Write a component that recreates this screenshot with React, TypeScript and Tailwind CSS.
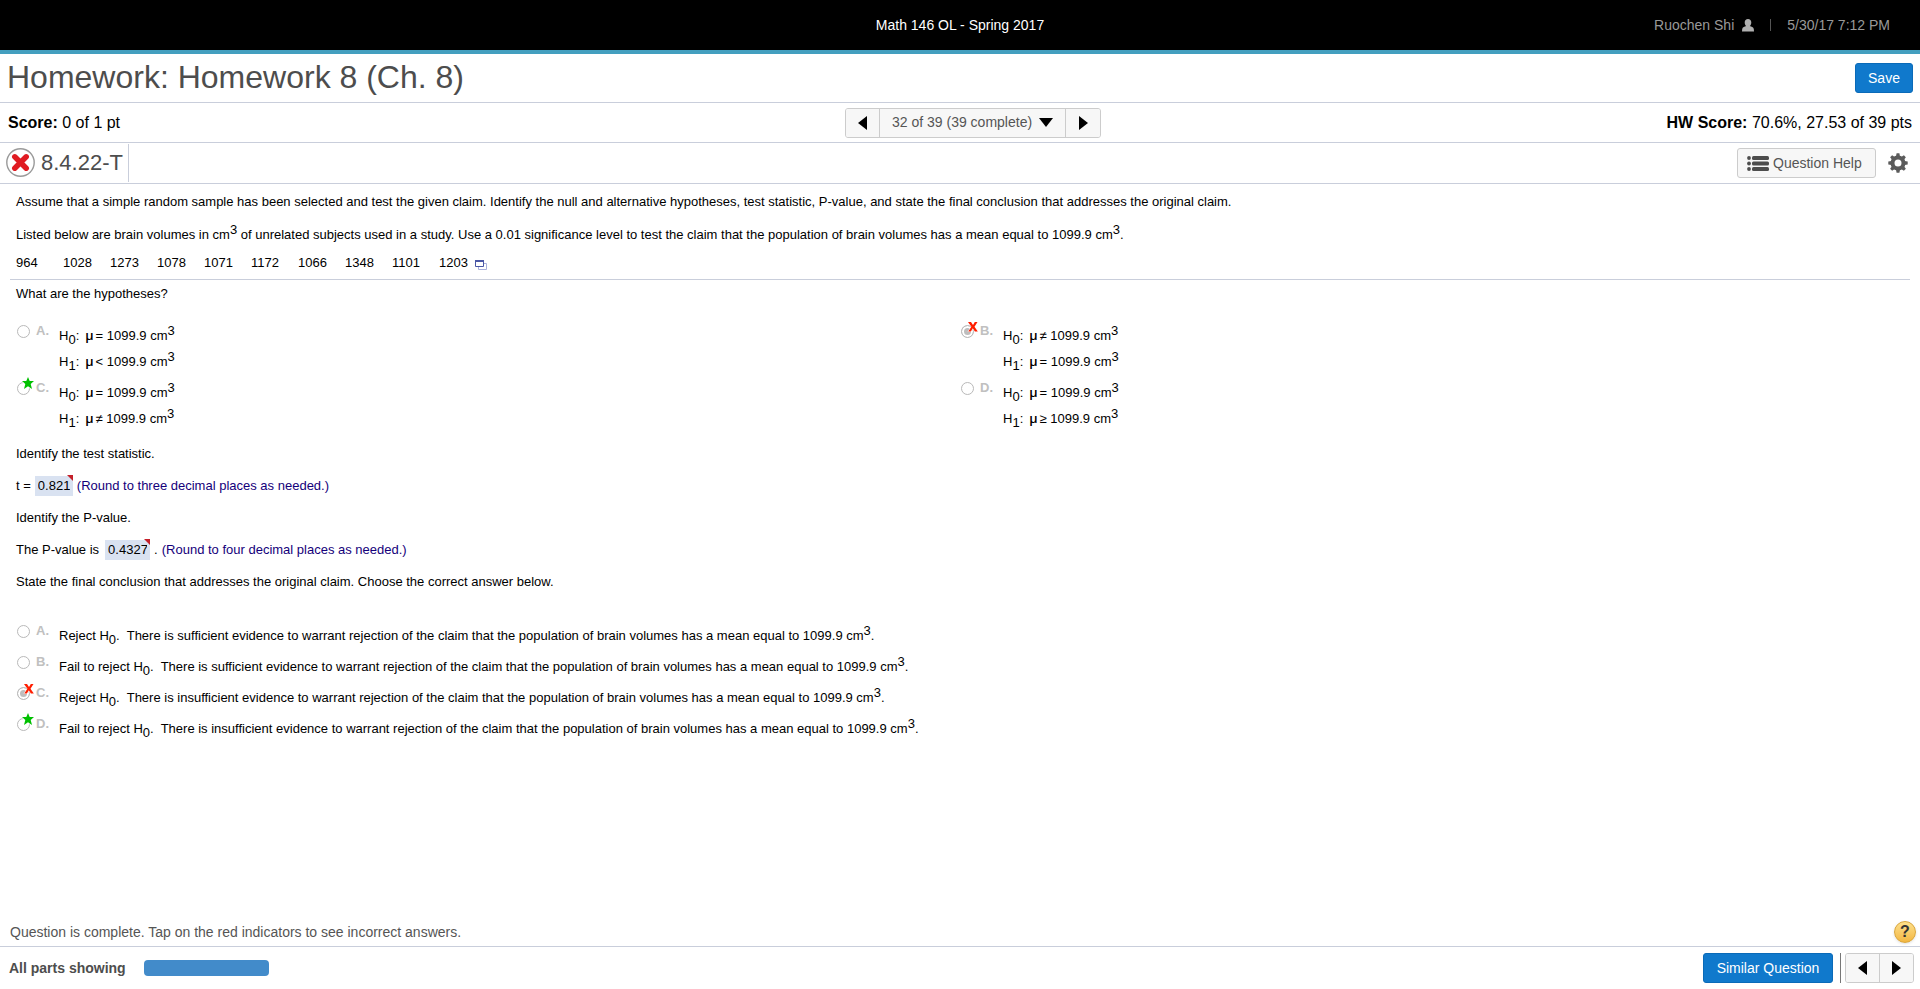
import type { ReactNode } from "react";

type Mark = "right" | "wrong";

interface Choice {
  letter: string;
  mark?: Mark;
  checked?: boolean;
  lines: ReactNode[];
}

const volumes = [964, 1028, 1273, 1078, 1071, 1172, 1066, 1348, 1101, 1203];

function Sup({ children }: { children: ReactNode }) {
  return <sup className="static align-[5px] text-[13px]">{children}</sup>;
}

function Sub({ children }: { children: ReactNode }) {
  return <sub className="static align-[-4px] text-[13px]">{children}</sub>;
}

function Hypothesis({ index, sign }: { index: number; sign: string }) {
  return (
    <>
      H<Sub>{index}</Sub>:
      <span className="mx-0.5 ml-1.5 font-['Open_Sans','Liberation_Sans',sans-serif] leading-none font-semibold">
        μ
      </span>
      {sign} 1099.9 cm<Sup>3</Sup>
    </>
  );
}

function Conclusion({ verb, amount }: { verb: string; amount: string }) {
  return (
    <>
      {verb} H<Sub>0</Sub>.&nbsp; There is {amount} evidence to warrant rejection of the claim that the population of
      brain volumes has a mean equal to 1099.9 cm<Sup>3</Sup>.
    </>
  );
}

const hypotheses: Choice[] = [
  { letter: "A", lines: [<Hypothesis index={0} sign="=" />, <Hypothesis index={1} sign="<" />] },
  {
    letter: "B",
    mark: "wrong",
    checked: true,
    lines: [<Hypothesis index={0} sign="≠" />, <Hypothesis index={1} sign="=" />],
  },
  { letter: "C", mark: "right", lines: [<Hypothesis index={0} sign="=" />, <Hypothesis index={1} sign="≠" />] },
  { letter: "D", lines: [<Hypothesis index={0} sign="=" />, <Hypothesis index={1} sign="≥" />] },
];

const conclusions: Choice[] = [
  { letter: "A", lines: [<Conclusion verb="Reject" amount="sufficient" />] },
  { letter: "B", lines: [<Conclusion verb="Fail to reject" amount="sufficient" />] },
  { letter: "C", mark: "wrong", checked: true, lines: [<Conclusion verb="Reject" amount="insufficient" />] },
  { letter: "D", mark: "right", lines: [<Conclusion verb="Fail to reject" amount="insufficient" />] },
];

function MarkIcon({ mark }: { mark: Mark }) {
  return mark === "right" ? (
    <svg viewBox="0 0 12 12" className="absolute -top-[5px] left-[5px] size-3 overflow-visible" aria-hidden="true">
      <path
        d="M6 0l1.700 4.100H12L8.700 7l1.300 5L6 9.200 2 12l1.300-5L0 4.100h4.300z"
        fill="#00c000"
        stroke="#ffffff"
        strokeWidth="1.500"
        paintOrder="stroke"
      />
    </svg>
  ) : (
    <svg viewBox="0 0 10 10" className="absolute -top-[3px] left-[7px] size-[10px] overflow-visible" aria-hidden="true">
      <path
        d="M0 0h3L5 3 6.800 0h2.700L6.500 4.700 9.800 9.500H6.900L4.800 6.300 2.900 9.500H.2L3.400 4.700z"
        fill="#ff1e00"
        stroke="#ffffff"
        paintOrder="stroke"
      />
    </svg>
  );
}

function ChoiceRow({ group, choice }: { group: string; choice: Choice }) {
  const id = `${group}-${choice.letter}`;
  return (
    <div className="flex items-start">
      <span className="relative mt-[3px] mr-1.5 ml-px flex">
        <input
          type="radio"
          id={id}
          name={group}
          disabled
          defaultChecked={choice.checked}
          className="size-[13px] appearance-none rounded-full border border-[#b9b9b9] bg-white checked:bg-[#bdbdbd] checked:shadow-[inset_0_0_0_2px_white]"
        />
        {choice.mark && <MarkIcon mark={choice.mark} />}
      </span>
      <label htmlFor={id} className="flex items-start">
        <span className="w-[23px] text-[13px] leading-[18px] font-bold text-[#c0c0c0]">{choice.letter}.</span>
        <span className="flex flex-col gap-1.5 pt-1 leading-5">
          {choice.lines.map((line, i) => (
            <span key={i}>{line}</span>
          ))}
        </span>
      </label>
    </div>
  );
}

function Answer({ id, value, label, wide }: { id: string; value: string; label: string; wide?: boolean }) {
  return (
    <span className={`relative inline-flex ${wide ? "mr-1 ml-1.5" : "mx-1"}`}>
      <input
        id={id}
        aria-label={label}
        readOnly
        value={value}
        className={`h-5 bg-[#d9e2f1] px-[3px] ${wide ? "w-[45px]" : "w-[38px]"}`}
      />
      <svg viewBox="0 0 6 6" className="absolute -top-px right-0 size-1.5" aria-hidden="true">
        <path d="M0 0h6v6z" fill="#c4202a" />
      </svg>
    </span>
  );
}

function Arrow({ left }: { left?: boolean }) {
  return (
    <svg viewBox="0 0 9 14" className="h-3.5 w-[9px]" aria-hidden="true">
      <path d={left ? "M9 0v14L0 7z" : "M0 0v14l9-7z"} fill="#000000" />
    </svg>
  );
}

const stepButton = "flex h-full w-[34px] items-center justify-center bg-[#f7f7f7]";
const blueButton = "h-[30px] rounded-[3px] border border-[#0a6ab8] bg-[#1079cc] text-white";

export default function App() {
  return (
    <div className="flex min-h-screen flex-col bg-white font-['Liberation_Sans',Arial,sans-serif] text-[13px] text-black">
      <header className="grid h-[54px] grid-cols-[1fr_auto_1fr] items-center border-b-4 border-[#439fbf] bg-black text-[14px]">
        <span />
        <span className="text-white">Math 146 OL - Spring 2017</span>
        <div className="flex items-center justify-end pr-[30px] text-[#999999]">
          <span>Ruochen Shi</span>
          <svg viewBox="0 0 12 13" className="mr-4 ml-2 h-[13px] w-3" fill="#b0b0b0" aria-hidden="true">
            <path d="M6 0c2 0 3.300 1.500 3.300 3.500 0 1.500-.6 2.900-1.500 3.600 1.600.6 3.700 1 4 3L12 12.500H0L.2 10.100c.3-2 2.400-2.400 4-3-.9-.7-1.500-2.100-1.500-3.600C2.700 1.500 4 0 6 0z" />
          </svg>
          <span className="mr-4 h-3 w-px bg-[#555555]" />
          <span>5/30/17 7:12 PM</span>
        </div>
      </header>

      <div className="flex h-[49px] items-center justify-between border-b border-[#c9cedb] pr-[7px] pl-[7px]">
        <h1 className="pb-0.5 text-[32px] leading-9 text-[#4d4d4d]">Homework: Homework 8 (Ch. 8)</h1>
        <button type="button" className={`${blueButton} w-[58px] text-[14px]`}>
          Save
        </button>
      </div>

      <div className="grid h-10 grid-cols-[1fr_auto_1fr] items-center border-b border-[#c9cedb] px-2 text-[16px]">
        <p>
          <b>Score:</b> 0 of 1 pt
        </p>
        <nav className="ml-[26px] flex h-[30px] divide-x divide-[#cccccc] overflow-hidden rounded-[3px] border border-[#cccccc] bg-[#f7f7f7] text-[14px] text-[#555555]">
          <button type="button" aria-label="Previous question" className={stepButton}>
            <Arrow left />
          </button>
          <span className="relative flex items-center">
            <select aria-label="Question" className="h-full w-[185px] appearance-none bg-transparent pl-3">
              <option>32 of 39 (39 complete)</option>
            </select>
            <svg viewBox="0 0 14 9" className="pointer-events-none absolute right-3 h-[9px] w-3.5" aria-hidden="true">
              <path d="M0 0h14L7 9z" fill="#000000" />
            </svg>
          </span>
          <button type="button" aria-label="Next question" className={stepButton}>
            <Arrow />
          </button>
        </nav>
        <p className="text-right">
          <b>HW Score:</b> 70.6%, 27.53 of 39 pts
        </p>
      </div>

      <div className="flex h-[41px] items-center justify-between border-b border-[#c9cedb] pr-3 pl-1.5">
        <div className="flex h-[38px] items-center gap-1.5 border-r border-[#c9cedb] pr-[5px] pb-0.5">
          <svg viewBox="0 0 29 29" className="size-[29px]" aria-hidden="true">
            <circle cx="14.500" cy="14.500" r="13.700" fill="#ffffff" stroke="#9a9a9a" strokeWidth="1.400" />
            <path d="M8.800 8.800l11.400 11.400M20.200 8.800L8.800 20.200" stroke="#e01b22" strokeWidth="5.500" strokeLinecap="round" />
          </svg>
          <h2 className="text-[22px] text-[#4d4d4d]">8.4.22-T</h2>
        </div>
        <div className="flex items-center gap-3">
          <button
            type="button"
            className="flex h-[30px] w-[139px] items-center gap-1 rounded-[3px] border border-[#cccccc] bg-[#f7f7f7] pl-[9px] text-[14px] text-[#555555]"
          >
            <svg viewBox="0 0 22 15" className="h-[15px] w-[22px]" fill="#4d4d4d" aria-hidden="true">
              {[2, 7.5, 13].map((y) => (
                <g key={y}>
                  <circle cx="2" cy={y} r="1.900" />
                  <rect x="5" y={y - 2} width="17" height="4" rx="1.500" />
                </g>
              ))}
            </svg>
            Question Help
          </button>
          <button type="button" aria-label="Settings">
            <svg viewBox="0 0 20 20" className="size-5" aria-hidden="true">
              <circle cx="10" cy="10" r="5.500" fill="none" stroke="#5b5b5b" strokeWidth="4" />
              {[0, 45, 90, 135, 180, 225, 270, 315].map((a) => (
                <path key={a} d="M8 3.500L8.600.3h2.800l.6 3.200z" fill="#5b5b5b" transform={`rotate(${a} 10 10)`} />
              ))}
            </svg>
          </button>
        </div>
      </div>

      <main className="flex grow flex-col">
        <section className="mx-[10px] border-b border-[#c9cedb] px-1.5 pt-2 pb-1.5 leading-5">
          <p>
            Assume that a simple random sample has been selected and test the given claim. Identify the null and
            alternative hypotheses, test statistic, P-value, and state the final conclusion that addresses the original
            claim.
          </p>
          <p className="mt-[13px]">
            Listed below are brain volumes in cm<Sup>3</Sup> of unrelated subjects used in a study. Use a 0.01
            significance level to test the claim that the population of brain volumes has a mean equal to 1099.9 cm
            <Sup>3</Sup>.
          </p>
          <div className="mt-2 flex items-center">
            <table>
              <tbody>
                <tr>
                  {volumes.map((v) => (
                    <td key={v} className="w-[47px] min-w-[47px] p-0 last:w-9 last:min-w-9">
                      {v}
                    </td>
                  ))}
                </tr>
              </tbody>
            </table>
            <button type="button" aria-label="Open data table">
              <svg viewBox="0 0 12 10" className="mt-1 h-[10px] w-3" aria-hidden="true">
                <path d="M3.500 3.500h8v6h-8z" fill="#ffffff" stroke="#a9b0dc" />
                <path d="M.5.5h8v6h-8z" fill="#ffffff" stroke="#4a57a6" />
                <path d="M0 0h9v2H0z" fill="#4a57a6" />
              </svg>
            </button>
          </div>
        </section>

        <section className="px-4 pt-1 leading-5">
          <p>What are the hypotheses?</p>
          <div className="mt-[18px] grid grid-cols-2 gap-y-[7px]">
            {hypotheses.map((c) => (
              <ChoiceRow key={c.letter} group="hypotheses" choice={c} />
            ))}
          </div>
          <div className="mt-[15px] flex flex-col gap-3">
            <p>Identify the test statistic.</p>
            <p className="flex items-center">
              t =<Answer id="statistic" value="0.821" label="Test statistic" />
              <span className="text-[#14007a]">(Round to three decimal places as needed.)</span>
            </p>
            <p>Identify the P-value.</p>
            <p className="flex items-center">
              The P-value is
              <Answer id="p-value" value="0.4327" label="P-value" wide />
              <span className="mr-1">.</span>
              <span className="text-[#14007a]">(Round to four decimal places as needed.)</span>
            </p>
            <p>State the final conclusion that addresses the original claim. Choose the correct answer below.</p>
          </div>
          <div className="mt-[30px] flex flex-col gap-[7px]">
            {conclusions.map((c) => (
              <ChoiceRow key={c.letter} group="conclusions" choice={c} />
            ))}
          </div>
        </section>

        <div className="mt-auto flex items-center justify-between pr-1 pb-[3px] pl-2.5 text-[14px] text-[#555555]">
          <p>Question is complete. Tap on the red indicators to see incorrect answers.</p>
          <button
            type="button"
            aria-label="Help"
            className="flex size-[22px] items-center justify-center rounded-full border border-[#d9a53c] bg-linear-to-b from-[#fde08a] to-[#f3b740] text-[16px] font-bold text-[#333333] shadow-sm"
          >
            ?
          </button>
        </div>
      </main>

      <footer className="flex h-[43px] items-center justify-between border-t border-[#c9cedb] pr-1.5 pl-[9px]">
        <div className="flex items-center gap-[18px]">
          <b className="text-[14px] text-[#4d4d4d]">All parts showing</b>
          <span className="h-4 w-[125px] rounded-[4px] bg-[#428bca]" />
        </div>
        <div className="flex h-[30px]">
          <button type="button" className={`${blueButton} w-[130px] text-[14px]`}>
            Similar Question
          </button>
          <span className="mr-1 ml-[7px] w-px bg-[#777777]" />
          <div className="flex divide-x divide-[#cccccc] overflow-hidden rounded-[3px] border border-[#cccccc]">
            <button type="button" aria-label="Previous part" className={stepButton}>
              <Arrow left />
            </button>
            <button type="button" aria-label="Next part" className="flex h-full w-[33px] items-center justify-center bg-[#f7f7f7]">
              <Arrow />
            </button>
          </div>
        </div>
      </footer>
    </div>
  );
}
